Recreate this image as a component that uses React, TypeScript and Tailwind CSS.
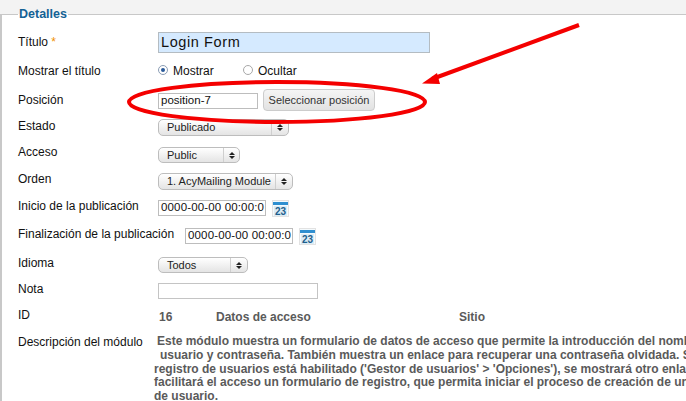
function Row({ label, height, children, labelClass }: { label: React.ReactNode; height: string; children?: React.ReactNode; labelClass?: string }) {
    return (
        <div className={`flex items-center ${height}`}>
            <div className={`shrink-0 text-[12px] leading-[14px] text-[#111] ${labelClass ?? "mb-[4px] w-[140px]"}`}>{label}</div>
            {children}
        </div>
    );
}

function Select({ value, width, height, arrowWidth }: { value: string; width: string; height: string; arrowWidth: string }) {
    return (
        <div className={`flex ${height} ${width} items-stretch rounded-[5px] border border-[#bdbdbd] bg-gradient-to-b from-[#ffffff] to-[#e4e4e4] text-[11px] leading-[14px] text-[#222]`}>
            <div className="min-w-0 flex-1 overflow-hidden whitespace-nowrap pl-[8px]">{value}</div>
            <div className={`flex ${arrowWidth} flex-col items-center justify-center gap-[1px] border-l border-[#cfcfcf]`}>
                <div className="h-0 w-0 border-x-[3px] border-b-[3px] border-x-transparent border-b-[#222]" />
                <div className="h-0 w-0 border-x-[3px] border-t-[3px] border-x-transparent border-t-[#222]" />
            </div>
        </div>
    );
}

function DateInput() {
    return (
        <div className="flex items-center gap-[6px]">
            <div className="flex h-[16px] w-[108px] items-center overflow-hidden border border-[#bdbdbd] bg-white pl-[2px] text-[11.5px] tracking-[0.15px] whitespace-nowrap text-[#111]">
                0000-00-00 00:00:0
            </div>
            <svg width="17" height="17" viewBox="0 0 17 17">
                <rect width="17" height="17" fill="#e2e2e2" />
                <rect x="1" y="1" width="15" height="15" fill="#f4fafd" />
                <rect x="1" y="2" width="15" height="3" fill="#2f8fd0" />
                <rect x="2" y="6" width="13" height="10" fill="#dcecf5" />
                <text x="8.5" y="15" textAnchor="middle" fontFamily="Liberation Sans, sans-serif" fontSize="10" fontWeight="700" fill="#1f5f8c">23</text>
            </svg>
        </div>
    );
}

export default function App() {
    return (
        <div className="relative h-[401px] w-[686px] overflow-hidden bg-white font-['Liberation_Sans',Arial,sans-serif]">
            <div className="h-[14px] bg-[#f3f3f3]" />
            <div className="h-[387px] border-t border-l-2 border-[#c8c8c8] pl-[16px]">
                <div className="-mt-[9px] w-fit text-[12.5px] leading-[16px] font-bold text-[#146295] [background:linear-gradient(#f3f3f3_50%,#ffffff_50%)]">
                    <span className="px-[1px]">Detalles</span>
                </div>

                <div className="mt-[6px]">
                    <Row height="h-[29px]" labelClass="mb-[1px] w-[140px]" label={<>Título <span className="text-[#f09000]">*</span></>}>
                        <div className="flex h-[21px] w-[272px] items-center border border-[#b4bcc2] bg-[#d5eaff] pl-[2px] text-[14.5px] tracking-[0.6px] text-[#111]">Login Form</div>
                    </Row>
                    <Row height="h-[28px]" labelClass="w-[140px]" label="Mostrar el título">
                        <div className="flex items-center text-[12px] text-[#111]">
                            <span className="-mt-[3px] flex h-[10px] w-[10px] items-center justify-center rounded-full border border-[#8b9db5] bg-white">
                                <span className="h-[4px] w-[4px] rounded-full bg-[#2a5a9a]" />
                            </span>
                            <span className="ml-[5px] w-[70px]">Mostrar</span>
                            <span className="-mt-[3px] h-[10px] w-[10px] rounded-full border border-[#a8a8a8] bg-white" />
                            <span className="ml-[5px]">Ocultar</span>
                        </div>
                    </Row>
                    <Row height="h-[30px]" labelClass="mb-[1px] w-[140px]" label="Posición">
                        <div className="flex items-center gap-[5px]">
                            <div className="mt-[2px] flex h-[16px] w-[100px] items-center border border-[#bdbdbd] bg-white pl-[2px] text-[11.5px] text-[#111]">position-7</div>
                            <div className="flex h-[22px] w-[112px] items-center justify-center rounded-[4px] border border-[#cccccc] bg-gradient-to-b from-[#f5f5f5] to-[#e2e2e2] text-[11px] text-[#333]">Seleccionar posición</div>
                        </div>
                    </Row>
                    <Row height="h-[25px]" labelClass="mb-[3px] w-[140px]" label="Estado">
                        <Select value="Publicado" width="w-[131px]" height="h-[17px]" arrowWidth="w-[17px]" />
                    </Row>
                    <Row height="h-[30px]" labelClass="mb-[6px] w-[140px]" label="Acceso">
                        <Select value="Public" width="w-[82px]" height="h-[16px]" arrowWidth="w-[16px]" />
                    </Row>
                    <Row height="h-[23px]" labelClass="mb-[5px] w-[140px]" label="Orden">
                        <Select value="1. AcyMailing Module" width="w-[135px]" height="h-[17px]" arrowWidth="w-[17px]" />
                    </Row>
                    <Row height="h-[30px]" label="Inicio de la publicación">
                        <DateInput />
                    </Row>
                    <Row height="h-[26px]" labelClass="mb-[4px] w-[167px]" label="Finalización de la publicación">
                        <DateInput />
                    </Row>
                    <Row height="h-[32px]" label="Idioma">
                        <Select value="Todos" width="w-[90px]" height="h-[16px]" arrowWidth="w-[17px]" />
                    </Row>
                    <Row height="h-[20px]" label="Nota">
                        <div className="h-[16px] w-[160px] border border-[#c4c4c4] bg-white" />
                    </Row>
                    <Row height="h-[32px]" label="ID">
                        <div className="flex pl-[1px] text-[12px] font-bold text-[#5a5a5a]">
                            <span className="w-[57px]">16</span>
                            <span className="w-[243px]">Datos de acceso</span>
                            <span>Sitio</span>
                        </div>
                    </Row>
                    <div className="mt-[2px] flex">
                        <div className="w-[136px] shrink-0 text-[12px] leading-[14px] text-[#111]">Descripción del módulo</div>
                        <div className="text-[12px] leading-[13.8px] font-bold whitespace-nowrap text-[#5a5a5a]">
                            <div className="pl-[3px]">Este módulo muestra un formulario de datos de acceso que permite la introducción del nombre de</div>
                            <div className="pl-[6px]">usuario y contraseña. También muestra un enlace para recuperar una contraseña olvidada. Si el</div>
                            <div>registro de usuarios está habilitado ('Gestor de usuarios' &gt; 'Opciones'), se mostrará otro enlace que</div>
                            <div>facilitará el acceso un formulario de registro, que permita iniciar el proceso de creación de una cuenta</div>
                            <div>de usuario.</div>
                        </div>
                    </div>
                </div>
            </div>

            <svg className="absolute top-0 left-0" width="686" height="401" viewBox="0 0 686 401" fill="none">
                <ellipse cx="277" cy="102" rx="148" ry="20" stroke="#f40000" strokeWidth="4" />
                <path d="M579 25 L432 79" stroke="#f40000" strokeWidth="4" />
                <path d="M422 83.5 L437 73 L440 84 Z" fill="#f40000" />
            </svg>
        </div>
    );
}
